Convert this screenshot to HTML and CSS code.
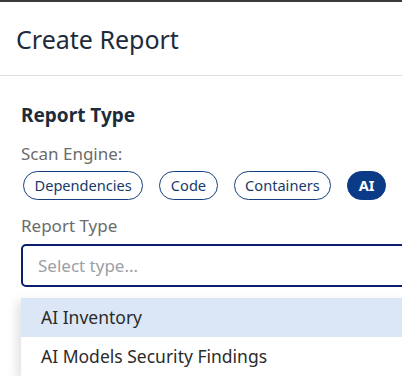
FILE: index.html
```html
<!DOCTYPE html>
<html lang="en">

<head>
    <meta charset="UTF-8">
    <meta name="viewport" content="width=device-width, initial-scale=1.0">
    <title>Create Report</title>
    <link rel="stylesheet" href="styles.css">
</head>

<body>
    <div class="modal">
        <div class="modal-header">
            <h1>Create Report</h1>
        </div>
        <div class="modal-body">
            <h2>Report Type</h2>
            <div class="label">Scan Engine:</div>
            <div class="chips">
                <span class="chip">Dependencies</span>
                <span class="chip">Code</span>
                <span class="chip">Containers</span>
                <span class="chip active">AI</span>
            </div>
            <div class="label">Report Type</div>
            <div class="select">
                <div class="select-input">Select type...</div>
                <ul class="options">
                    <li class="option highlighted">AI Inventory</li>
                    <li class="option">AI Models Security Findings</li>
                </ul>
            </div>
        </div>
    </div>
</body>

</html>
```

FILE: styles.css
```css
html, body {
    margin: 0;
    overflow: hidden;
}

body {
    font-family: "Noto Sans", sans-serif;
    background-color: #fff;
    color: #1f2a37;
}

.modal {
    width: 480px;
    border-top: 2px solid #3a3a3a;
}

.modal-header {
    height: 73px;
    display: flex;
    align-items: center;
    padding-left: 16px;
    border-bottom: 1px solid #dedede;
}

.modal-header h1 {
    margin: 0;
    font-size: 25px;
    font-weight: 400;
    color: #1d2b3a;
}

.modal-body {
    padding: 26px 0 0 21px;
}

.modal-body h2 {
    margin: 0 0 14px;
    font-size: 19px;
    font-weight: 700;
    color: #1d2b3a;
}

.label {
    font-size: 17px;
    color: #6b6b6b;
    line-height: 24px;
}

.chips {
    display: flex;
    gap: 16px;
    margin: 5px 0 14px 2px;
}

.chip {
    box-sizing: border-box;
    border: 1px solid #153f7c;
    border-radius: 15px;
    padding: 0 10.5px;
    height: 29px;
    line-height: 27px;
    font-size: 14.6px;
    color: #163a6b;
}

.chip.active {
    background-color: #0b3a86;
    border-color: #0b3a86;
    color: #fff;
    font-weight: 700;
}

.select {
    margin-top: 6px;
}

.select-input {
    box-sizing: border-box;
    height: 43px;
    line-height: 39px;
    border: 2px solid #0a1f6e;
    border-radius: 5px;
    padding-left: 15px;
    font-size: 17px;
    color: #9aa0a6;
}

.options {
    list-style: none;
    margin: 11px 0 0;
    padding: 0;
    box-shadow: -4px 4px 10px rgba(0, 0, 0, 0.12);
}

.option {
    padding: 0 20px;
    height: 39px;
    line-height: 39px;
    font-size: 17.5px;
    color: #2b2b2b;
}

.option.highlighted {
    background-color: #dbe7f6;
}
```
